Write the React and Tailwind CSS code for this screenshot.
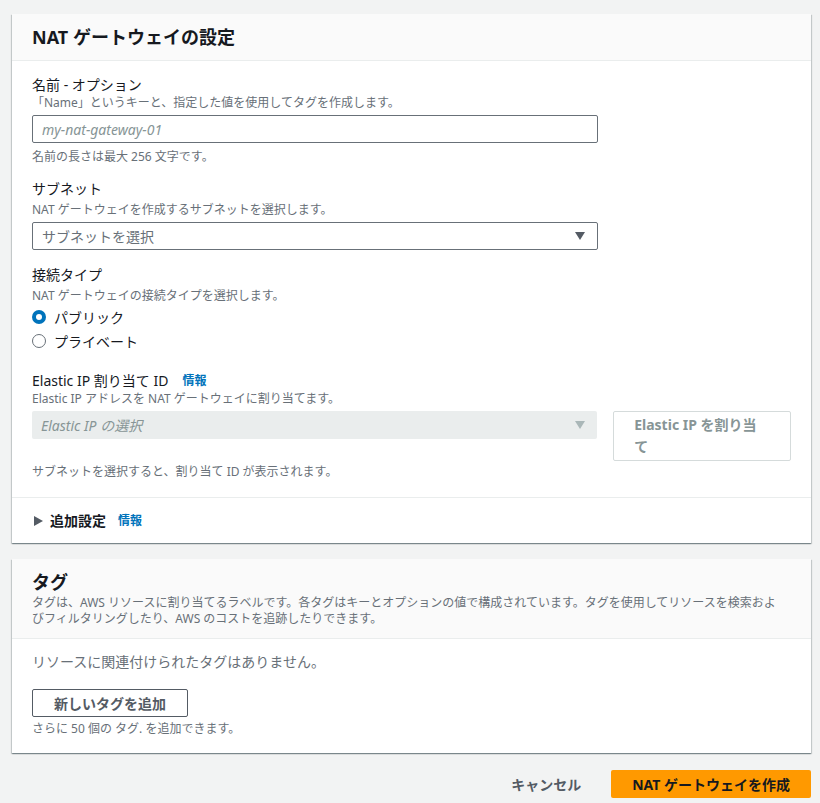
import React, { useState } from 'react';

const font = { fontFamily: '"Noto Sans", "Noto Sans CJK JP", sans-serif' };

function Caret({ color = '#545b64' }) {
  return (
    <svg width="12" height="10" viewBox="0 0 12 10">
      <polygon points="1,1 11,1 6,9" fill={color} />
    </svg>
  );
}

function Radio({ checked, label, onClick }) {
  return (
    <label className="flex items-center gap-[8px] h-[24px] cursor-pointer" onClick={onClick}>
      {checked ? (
        <span className="w-[14px] h-[14px] rounded-full bg-[#0073bb] flex items-center justify-center">
          <span className="w-[6px] h-[6px] rounded-full bg-white" />
        </span>
      ) : (
        <span className="w-[14px] h-[14px] rounded-full border border-[#687078] bg-white" />
      )}
      <span className="text-[14px] text-[#16191f]">{label}</span>
    </label>
  );
}

export default function App() {
  const [type, setType] = useState('public');

  return (
    <div className="min-h-[803px] bg-[#f2f3f3] pt-[14px] pl-[12px] pr-[9px] pb-[6px]" style={font}>
      {/* NAT gateway settings */}
      <div className="bg-white shadow-[0_1px_1px_0_rgba(0,28,36,0.3),1px_1px_1px_0_rgba(0,28,36,0.15),-1px_1px_1px_0_rgba(0,28,36,0.15)]">
        <div className="bg-[#fafafa] border-b border-[#eaeded] h-[47px] flex items-center px-[20px]">
          <h2 className="text-[18px] font-bold text-[#16191f]">NAT ゲートウェイの設定</h2>
        </div>
        <div className="px-[20px] pt-[14px] pb-[17px]">
          <div className="text-[14px] leading-[20px] text-[#16191f]">名前 - オプション</div>
          <div className="text-[12px] leading-[16px] text-[#687078]">「Name」というキーと、指定した値を使用してタグを作成します。</div>
          <input
            className="mt-[4px] w-[566px] h-[28px] border border-[#687078] rounded-[2px] px-[9px] text-[14px] italic placeholder:text-[#879596] outline-none"
            placeholder="my-nat-gateway-01"
          />
          <div className="mt-[6px] text-[12px] leading-[16px] text-[#687078]">名前の長さは最大 256 文字です。</div>

          <div className="mt-[14px] text-[14px] leading-[20px] text-[#16191f]">サブネット</div>
          <div className="mt-[3px] text-[12px] leading-[16px] text-[#687078]">NAT ゲートウェイを作成するサブネットを選択します。</div>
          <div className="mt-[4px] w-[566px] h-[28px] border border-[#687078] rounded-[2px] pl-[9px] pr-[11px] flex items-center justify-between">
            <span className="text-[14px] text-[#687078]">サブネットを選択</span>
            <Caret />
          </div>

          <div className="mt-[15px] text-[14px] leading-[20px] text-[#16191f]">接続タイプ</div>
          <div className="mt-[3px] text-[12px] leading-[16px] text-[#687078]">NAT ゲートウェイの接続タイプを選択します。</div>
          <div className="mt-[1px]">
            <Radio checked={type === 'public'} label="パブリック" onClick={() => setType('public')} />
            <Radio checked={type === 'private'} label="プライベート" onClick={() => setType('private')} />
          </div>

          <div className="mt-[18px] flex items-center gap-[14px] text-[14px] leading-[20px]">
            <span className="text-[#16191f]">Elastic IP 割り当て ID</span>
            <span className="text-[12px] font-bold text-[#0073bb]">情報</span>
          </div>
          <div className="text-[12px] leading-[16px] text-[#687078]">Elastic IP アドレスを NAT ゲートウェイに割り当てます。</div>
          <div className="mt-[4px] flex gap-[16px] items-start">
            <div className="w-[566px] h-[28px] bg-[#eaeded] rounded-[2px] pl-[9px] pr-[11px] flex items-center justify-between">
              <span className="text-[14px] italic text-[#879596]">Elastic IP の選択</span>
              <Caret color="#aab7b8" />
            </div>
            <button className="w-[178px] h-[50px] border border-[#d5dbdb] rounded-[2px] bg-white text-left pl-[20px] pr-[30px] text-[14px] leading-[22px] font-bold text-[#879596]">
              Elastic IP を割り当て
            </button>
          </div>
          <div className="mt-[3px] text-[12px] leading-[16px] text-[#687078]">サブネットを選択すると、割り当て ID が表示されます。</div>
        </div>
        <div className="border-t border-[#eaeded] h-[46px] flex items-center px-[20px] gap-[6px]">
          <svg width="12" height="12" viewBox="0 0 12 12">
            <polygon points="2,1 11,6 2,11" fill="#545b64" />
          </svg>
          <span className="text-[14px] font-bold text-[#16191f]">追加設定</span>
          <span className="ml-[6px] text-[12px] font-bold text-[#0073bb]">情報</span>
        </div>
      </div>

      {/* Tags */}
      <div className="mt-[16px] bg-white shadow-[0_1px_1px_0_rgba(0,28,36,0.3),1px_1px_1px_0_rgba(0,28,36,0.15),-1px_1px_1px_0_rgba(0,28,36,0.15)]">
        <div className="bg-[#fafafa] border-b border-[#eaeded] px-[20px] pt-[10px] pb-[11px]">
          <h2 className="text-[18px] leading-[26px] font-bold text-[#16191f]">タグ</h2>
          <p className="text-[12px] leading-[16px] text-[#687078]">
            タグは、AWS リソースに割り当てるラベルです。各タグはキーとオプションの値で構成されています。タグを使用してリソースを検索およ
            <br />
            びフィルタリングしたり、AWS のコストを追跡したりできます。
          </p>
        </div>
        <div className="px-[20px] pt-[13px] pb-[16px]">
          <div className="text-[14px] leading-[20px] text-[#687078]">リソースに関連付けられたタグはありません。</div>
          <button className="mt-[17px] w-[156px] h-[28px] border border-[#545b64] rounded-[2px] bg-white text-[14px] font-bold text-[#545b64]">
            新しいタグを追加
          </button>
          <div className="mt-[4px] text-[12px] leading-[16px] text-[#687078]">さらに 50 個の タグ. を追加できます。</div>
        </div>
      </div>

      {/* Footer */}
      <div className="mt-[17px] flex justify-end items-center gap-[30px]">
        <button className="text-[14px] font-bold text-[#545b64]">キャンセル</button>
        <button className="h-[28px] px-[21px] bg-[#ff9900] rounded-[2px] text-[14px] font-bold text-[#16191f]">
          NAT ゲートウェイを作成
        </button>
      </div>
    </div>
  );
}
